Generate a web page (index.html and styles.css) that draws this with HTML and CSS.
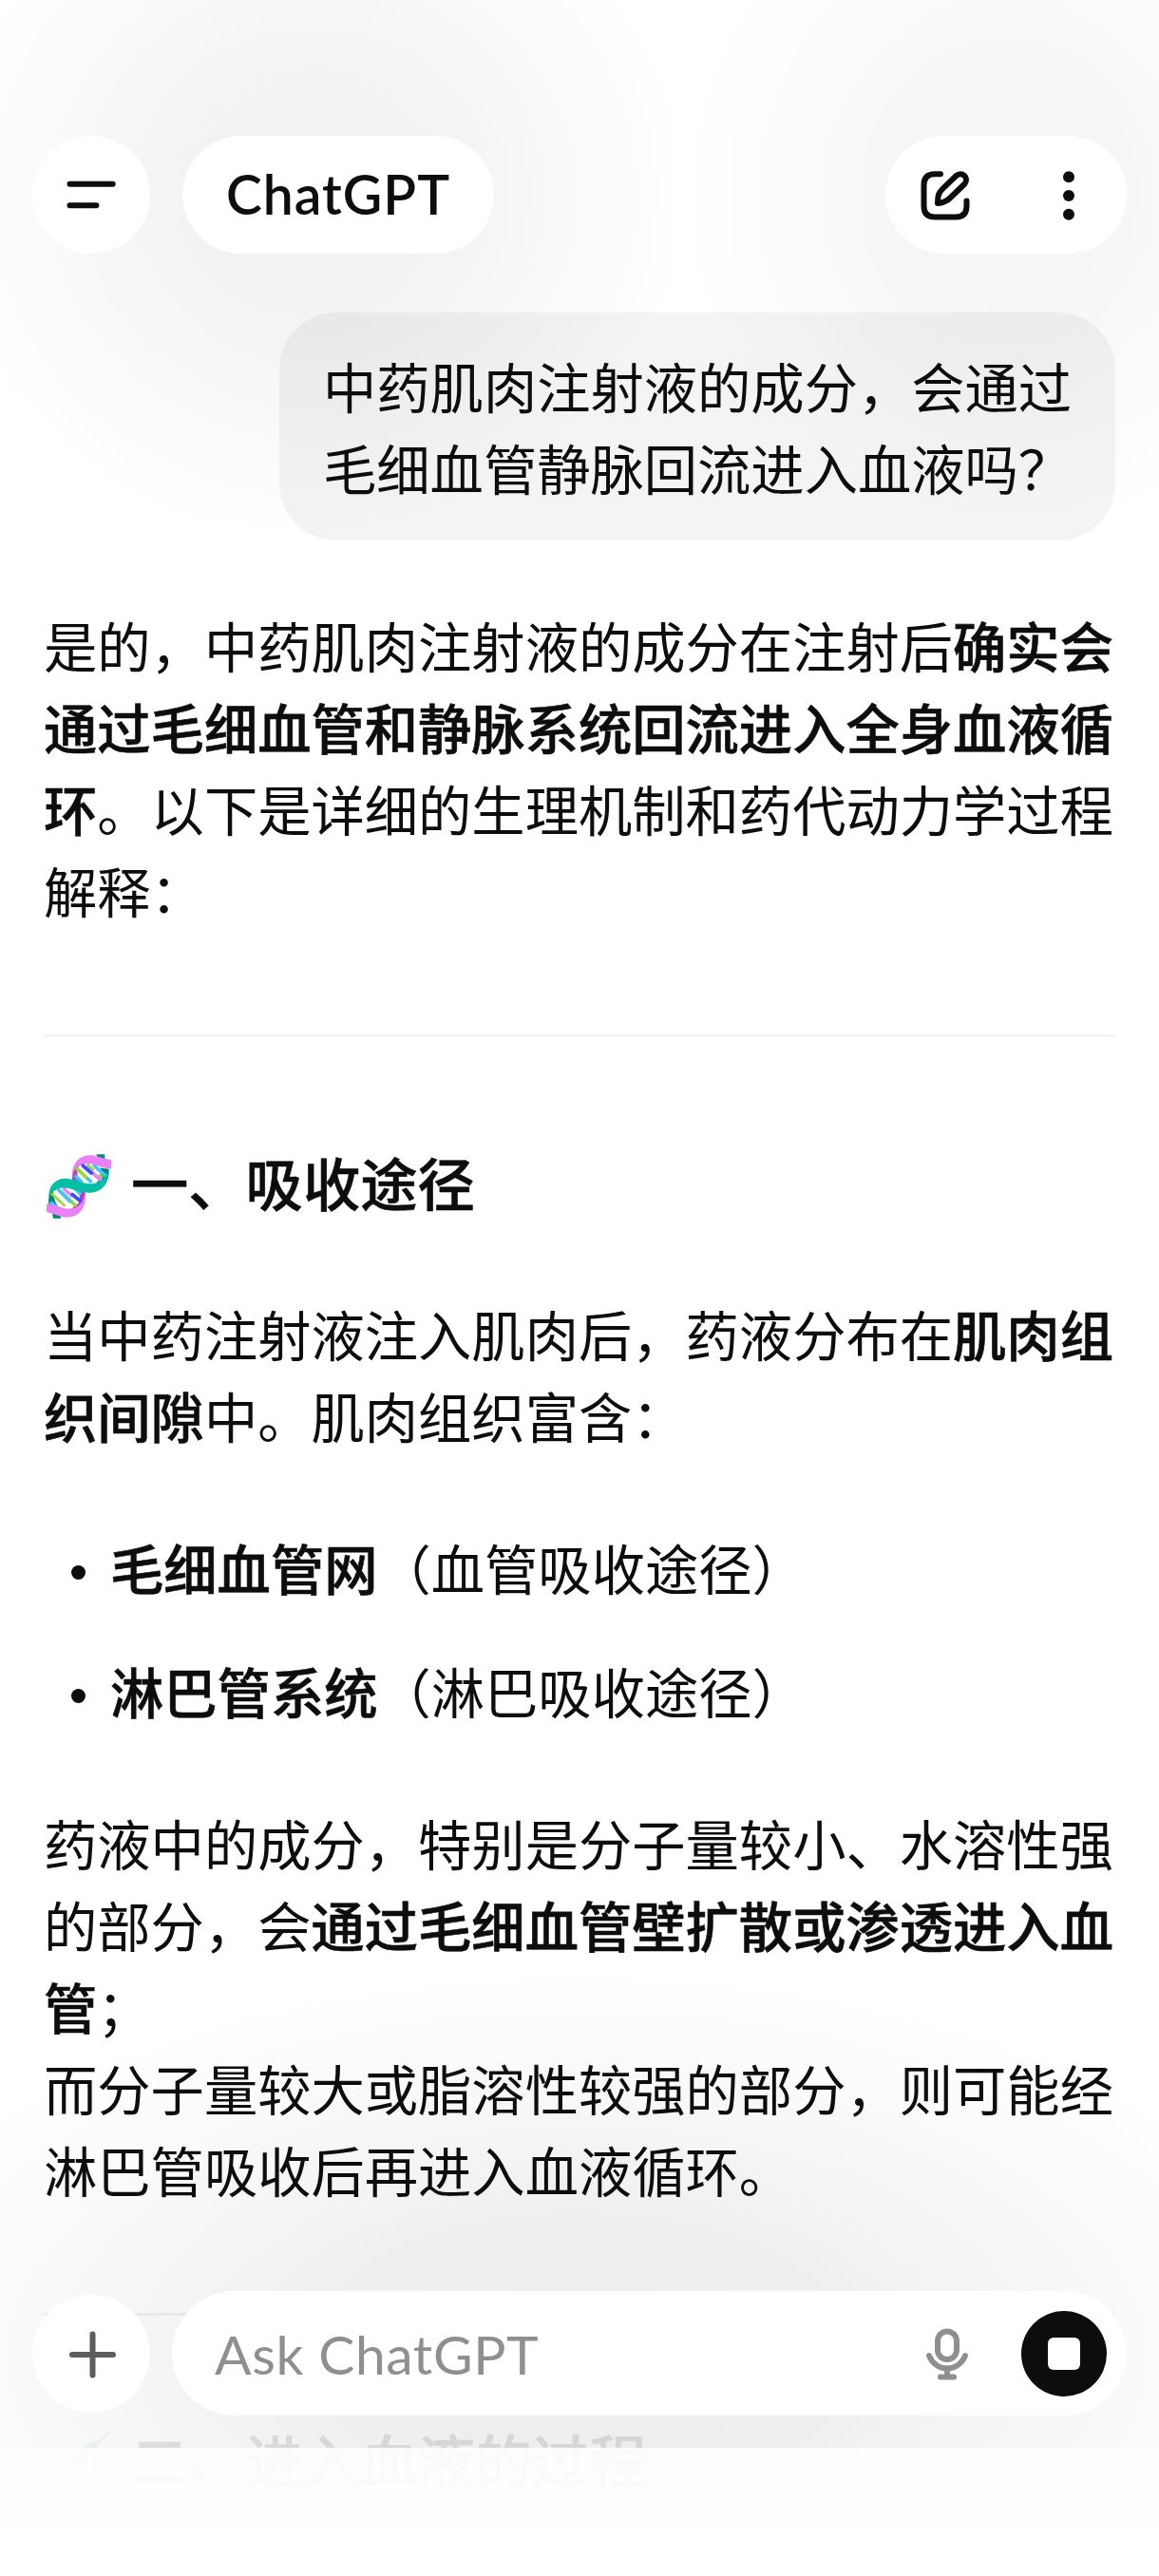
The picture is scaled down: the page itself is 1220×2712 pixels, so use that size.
FILE: index.html
```html
<!DOCTYPE html>
<html lang="zh-CN">
<head>
<meta charset="utf-8">
<title>ChatGPT</title>
<link rel="stylesheet" href="styles.css">
</head>
<body>
<div class="screen">
<main class="chat">
<div class="question">中药肌肉注射液的成分，会通过<br>毛细血管静脉回流进入血液吗？</div>
<p class="intro">是的，中药肌肉注射液的成分在注射后<b>确实会<br>通过毛细血管和静脉系统回流进入全身血液循<br>环</b>。以下是详细的生理机制和药代动力学过程<br>解释：</p>
<hr>
<h2><svg class="dna" width="68" height="68" viewBox="27 31 204 204">
<path d="M184 32H211V48H190ZM45 218H72V234H48Z" fill="#00897b"/>
<path d="M195 74L224 78Q226 112 207 133L185 122Q201 104 195 74ZM34 192Q29 158 50 136L68 143Q52 164 62 195Z" fill="#00897b"/>
<path d="M108 112Q105 76 127 62L150 60Q129 78 134 119ZM149 140Q152 178 136 200L106 204Q126 188 121 138Z" fill="#ab47bc"/>
<path d="M129 68Q165 54 198 75Q206 108 178 124Q151 128 127 113Q121 84 129 68ZM48 148Q80 131 116 140Q136 151 130 184Q117 199 90 198L60 192Q48 171 48 148Z" fill="#fff"/>
<g fill="none" stroke-width="11" stroke-linecap="round">
<path d="M123 77L157 109M65 144L117 192" stroke="#9ad832"/>
<path d="M151 72L198 113M82 141L106 163" stroke="#ea80fc"/>
<path d="M142 68L169 91M108 158L132 178" stroke="#304ffe"/>
<path d="M178 68L216 102M120 102L137 118M157 109L166 117M116 139L132 155M66 145L101 180M43 185L51 192" stroke="#40c4ff"/>
<path d="M157 65L173 79M194 97L202 105M44 157L83 193" stroke="#9ad832" stroke-width="8"/>
</g>
<path d="M108 112C102 50 143 23 193 40C208 45 220 48 231 49V78C214 76 201 72 187 67C137 52 112 63 108 112ZM27 188C44 190 57 194 73 199C120 214 147 191 149 143C158 210 120 240 73 228C57 224 43 217 27 215Z" fill="#ea80fc"/>
<path d="M34 169C32 128 58 107 88 108C126 110 144 128 173 124C202 121 218 102 224 79C226 131 193 160 147 152C116 147 98 134 71 138C49 142 36 153 34 169Z" fill="#00bfa5"/>
</svg>一、吸收途径</h2>
<p class="absorb">当中药注射液注入肌肉后，药液分布在<b>肌肉组<br>织间隙</b>中。肌肉组织富含：</p>
<ul><li><b>毛细血管网</b>（血管吸收途径）</li><li><b>淋巴管系统</b>（淋巴吸收途径）</li></ul>
<p class="detail">药液中的成分，特别是分子量较小、水溶性强<br>的部分，会<b>通过毛细血管壁扩散或渗透进入血<br>管</b>；<br>而分子量较大或脂溶性较强的部分，则可能经<br>淋巴管吸收后再进入血液循环。</p>
<hr class="second">
<h2 class="next"><svg class="syringe" width="68" height="68" viewBox="0 0 68 68"><path d="M67 1L54 13" stroke="#888" stroke-width="2"/><path d="M54 10L43 14L33 24L40 31L53 20Z" fill="#59c2b8"/><path d="M31 27L42 37" stroke="#888" stroke-width="4"/></svg>二、进入血液的过程</h2>
</main>
<div class="shade shade-top"></div>
<div class="shade shade-bottom"></div>
<div class="navarea"></div>
<header class="topbar">
<button class="round" aria-label="Menu"><svg width="60" height="60" viewBox="0 0 60 60"><path d="M7.500 18.700H52.700M7.500 41.200H35.400" class="stroke"/></svg></button>
<button class="brand"><span>ChatGPT</span></button>
<div class="actions">
<svg width="60" height="60" viewBox="0 0 60 60"><path d="M24 8.300H18Q6.500 8.300 6.500 20V42Q6.500 53.500 18 53.500H40Q51.500 53.500 51.500 42V36.500M21 39C21 31 22 28 26 24L40.500 10C46 5 54.500 11.500 49.500 18.500L34 33.500C30 37.500 27 38.500 21 39Z" class="stroke"/></svg>
<svg width="16" height="60" viewBox="0 0 16 60"><g fill="#0d0d0d"><circle cx="8" cy="11.200" r="6"/><circle cx="8" cy="31" r="6"/><circle cx="8" cy="50.700" r="6"/></g></svg>
</div>
</header>
<footer class="composer">
<button class="round" aria-label="Add"><svg width="60" height="60" viewBox="0 0 60 60"><path d="M31.500 9.500V52.500M10 31H53" class="stroke plus"/></svg></button>
<div class="input"><span class="hint">Ask ChatGPT</span>
<svg class="mic" width="48" height="60" viewBox="0 0 48 60"><rect x="14" y="6.500" width="20" height="29.500" rx="10"/><path d="M5 32C12 50 36 50 43 32M24 46V54M17 54.500H31"/></svg>
<button class="stop" aria-label="Stop"><i></i></button></div>
</footer>
</div>
</body>
</html>
```
FILE: styles.css
```css
body{margin:0;background:#fff;color:#0d0d0d;font-family:"Noto Sans CJK SC",sans-serif}
.screen{width:1220px;height:2712px;position:relative;overflow:hidden}
button{border:0;padding:0;background:#fff;color:#0d0d0d;display:flex;align-items:center;justify-content:center}
.topbar{position:absolute;top:143px;left:34px;right:34px;height:124px;display:flex;gap:34px}
.round{width:124px;height:124px;border-radius:62px}
.brand{box-sizing:border-box;width:328px;padding-bottom:3px;border-radius:62px;font:600 57px Lato,sans-serif;letter-spacing:1px}
.actions{margin-left:auto;display:flex;align-items:center;gap:91px;box-sizing:border-box;width:254px;padding-left:34px;background:#fff;border-radius:62px}
.stroke{fill:none;stroke:#0d0d0d;stroke-width:6;stroke-linecap:round;stroke-linejoin:round}
.plus{stroke:#5d5d5d}
.chat{padding:329px 46px 0;font-size:56.300px;line-height:86px;white-space:nowrap}
.question{width:788px;margin-left:auto;padding:34px 46px;background:#f4f4f4;border-radius:60px;height:172px}
b,h2{font-weight:500;-webkit-text-stroke:.6px currentColor}
p{margin:0}
.intro{margin-top:67px}
hr{border:0;height:3px;background:#f2f2f2;margin:109px 0 0}
h2{margin:107px 0 0;font-size:60.300px;line-height:90px;display:flex;align-items:center}
.dna,.syringe{margin:9px 21px 0 3px}
.absorb{margin-top:72px}
ul{list-style:none;margin:74px 0 0;padding:0 0 0 70px}
li{position:relative;margin-bottom:44px}
li::before{content:"";position:absolute;left:-41px;top:41px;width:15px;height:15px;border-radius:50%;background:#0d0d0d}
.detail{margin-top:74px}
.second{margin-top:108px}
.next{margin-top:105px;opacity:.1}
.shade{position:absolute;left:0;right:0}
.shade-top{top:0;height:580px;background:radial-gradient(ellipse 400px 370px at 330px 205px,rgba(0,0,0,.055),rgba(0,0,0,.05) 30%,rgba(0,0,0,.018) 70%,transparent),radial-gradient(ellipse 350px 370px at 1060px 205px,rgba(0,0,0,.04),rgba(0,0,0,.036) 30%,rgba(0,0,0,.012) 70%,transparent)}
.shade-bottom{top:2070px;height:507px;background:radial-gradient(ellipse 800px 410px at 610px 410px,rgba(0,0,0,.07),rgba(0,0,0,.062) 35%,rgba(0,0,0,.018) 75%,transparent)}
.navarea{position:absolute;top:2577px;left:0;right:0;height:135px;background:linear-gradient(rgba(253,253,253,.87),rgba(255,255,255,.9))}
.composer{position:absolute;top:2412px;left:34px;right:34px;height:131px;display:flex;align-items:center;gap:23px}
.input{flex:1;height:131px;border-radius:66px;background:#fff;display:flex;align-items:center;padding:0 21px 0 45px}
.hint{font:57px/70px Lato,sans-serif;letter-spacing:.6px;color:#8f8f8f}
.mic{margin-left:auto;margin-right:54px;fill:none;stroke:#8f8f8f;stroke-width:6;stroke-linecap:round}
.stop{width:90px;height:90px;border-radius:50%;background:#0d0d0d}
.stop i{width:34px;height:34px;border-radius:6px;background:#fff}
```
